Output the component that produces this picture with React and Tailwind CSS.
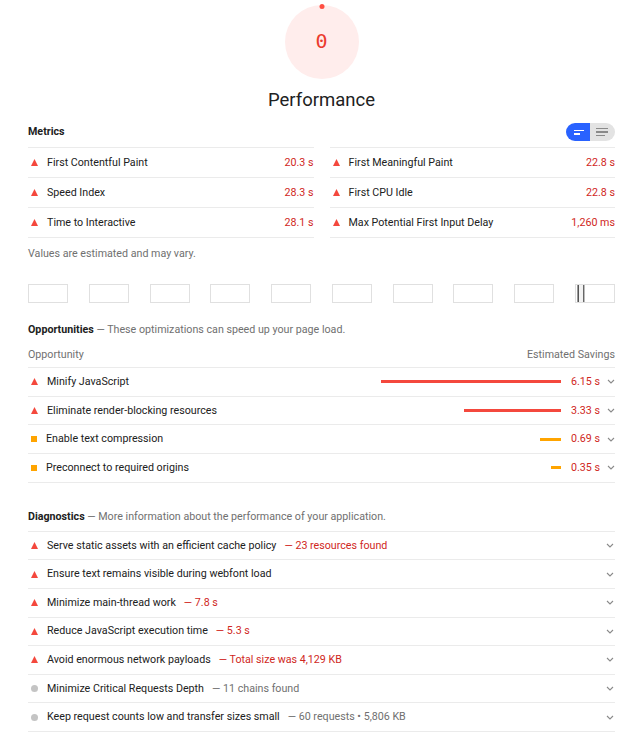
import React from "react";

const Tri = () => (
  <svg width="7" height="7" viewBox="0 0 7 7" className="shrink-0">
    <path d="M3.5 0 L7 7 L0 7 Z" fill="#f4483d" />
  </svg>
);

const Square = () => <span className="block w-[6px] h-[6px] bg-[#ffa400] shrink-0" />;

const Dot = () => <span className="block w-[7px] h-[7px] rounded-full bg-[#c4c4c4] shrink-0" />;

const Chevron = () => (
  <svg width="8" height="5" viewBox="0 0 8 5" className="shrink-0">
    <path d="M1 1 L4 4 L7 1" fill="none" stroke="#8a8a8a" strokeWidth="1.1" />
  </svg>
);

const metricsLeft = [
  ["First Contentful Paint", "20.3 s"],
  ["Speed Index", "28.3 s"],
  ["Time to Interactive", "28.1 s"],
];
const metricsRight = [
  ["First Meaningful Paint", "22.8 s"],
  ["First CPU Idle", "22.8 s"],
  ["Max Potential First Input Delay", "1,260 ms"],
];

const opportunities = [
  { kind: "fail", title: "Minify JavaScript", bar: 180, value: "6.15 s" },
  { kind: "fail", title: "Eliminate render-blocking resources", bar: 97, value: "3.33 s" },
  { kind: "avg", title: "Enable text compression", bar: 21, value: "0.69 s" },
  { kind: "avg", title: "Preconnect to required origins", bar: 10, value: "0.35 s" },
];

const diagnostics = [
  { kind: "fail", title: "Serve static assets with an efficient cache policy", detail: "23 resources found" },
  { kind: "fail", title: "Ensure text remains visible during webfont load" },
  { kind: "fail", title: "Minimize main-thread work", detail: "7.8 s" },
  { kind: "fail", title: "Reduce JavaScript execution time", detail: "5.3 s" },
  { kind: "fail", title: "Avoid enormous network payloads", detail: "Total size was 4,129 KB" },
  { kind: "info", title: "Minimize Critical Requests Depth", detail: "11 chains found" },
  { kind: "info", title: "Keep request counts low and transfer sizes small", detail: "60 requests \u2022 5,806 KB" },
];

function MetricColumn({ items }) {
  return (
    <div className="flex flex-col border-t border-[#ebebeb]">
      {items.map(([label, value]) => (
        <div key={label} className="h-[30px] border-b border-[#ebebeb] flex items-center pl-[3px]">
          <Tri />
          <span className="ml-[9px]">{label}</span>
          <span className="ml-auto text-[#d0271d]">{value}</span>
        </div>
      ))}
    </div>
  );
}

export default function App() {
  return (
    <div className="w-[643px] min-h-[756px] bg-white px-[28px] font-['Roboto',sans-serif] text-[10.7px] leading-[16px] text-[#212121]">
      {/* Gauge */}
      <div className="flex justify-center">
        <div className="relative mt-[4.5px] w-[74px] h-[74px] rounded-full bg-[#ffedec] flex items-center justify-center">
          <span className="absolute left-1/2 -translate-x-1/2 top-[-1px] w-[5px] h-[5px] rounded-full bg-[#ff4e42]" />
          <span className="font-['DejaVu_Sans_Mono',monospace] text-[20px] leading-[24px] text-[#eb3a2e] -mt-[2px]">0</span>
        </div>
      </div>
      <div className="mt-[9.5px] text-center text-[18.5px] leading-[24px] text-[#212121]">Performance</div>

      {/* Metrics header */}
      <div className="h-[35px] pt-[5px] flex items-center justify-between">
        <span className="font-bold">Metrics</span>
        <div className="flex h-[18px] w-[49px] rounded-full overflow-hidden">
          <div className="w-[24px] h-full bg-[#2962ff] flex flex-col justify-center pl-[8px] gap-[2px]">
            <span className="block w-[10px] h-[1.5px] bg-white" />
            <span className="block w-[6px] h-[1.5px] bg-white" />
          </div>
          <div className="flex-1 h-full bg-[#e3e3e3] flex flex-col justify-center pl-[6px] gap-[2px]">
            <span className="block w-[12px] h-[1.5px] bg-[#8a8a8a]" />
            <span className="block w-[12px] h-[1.5px] bg-[#8a8a8a]" />
            <span className="block w-[9px] h-[1.5px] bg-[#8a8a8a]" />
          </div>
        </div>
      </div>

      <div className="grid grid-cols-2 gap-x-4">
        <MetricColumn items={metricsLeft} />
        <MetricColumn items={metricsRight} />
      </div>

      <div className="mt-[8px] text-[#707070]">Values are estimated and may vary.</div>

      {/* Filmstrip */}
      <div className="mt-[22px] flex justify-between">
        {Array.from({ length: 10 }).map((_, i) => (
          <div key={i} className="w-[40px] h-[19px] border border-[#e0e0e0] bg-white relative overflow-hidden">
            {i === 9 && (
              <div className="absolute left-[1px] top-0 bottom-0 flex">
                <span className="block w-[1px] h-full bg-[#9a9a9a]" />
                <span className="block w-[1px] h-full bg-[#555]" />
                <span className="block w-[4px] h-full bg-[#f2f2f2]" />
                <span className="block w-[1px] h-full bg-[#666]" />
                <span className="block w-[1px] h-full bg-[#bbb]" />
              </div>
            )}
          </div>
        ))}
      </div>

      {/* Opportunities */}
      <div className="mt-[19px]">
        <span className="font-bold">Opportunities</span>
        <span className="text-[#707070]"> — These optimizations can speed up your page load.</span>
      </div>
      <div className="mt-[9px] pb-[4px] border-b border-[#ebebeb] flex justify-between text-[#707070]">
        <span>Opportunity</span>
        <span>Estimated Savings</span>
      </div>
      {opportunities.map((o) => (
        <div key={o.title} className="h-[28.7px] border-b border-[#ebebeb] flex items-center pl-[3px]">
          {o.kind === "fail" ? <Tri /> : <Square />}
          <span className="ml-[9px]">{o.title}</span>
          <div className="ml-auto flex items-center">
            <span
              className={"block h-[3px] mr-[10px] " + (o.kind === "fail" ? "bg-[#f4483d]" : "bg-[#ffa400]")}
              style={{ width: o.bar }}
            />
            <span className="text-[#d0271d]">{o.value}</span>
            <span className="ml-[7px]">
              <Chevron />
            </span>
          </div>
        </div>
      ))}

      {/* Diagnostics */}
      <div className="mt-[26px] pb-[6px] border-b border-[#ebebeb]">
        <span className="font-bold">Diagnostics</span>
        <span className="text-[#707070]"> — More information about the performance of your application.</span>
      </div>
      {diagnostics.map((d) => (
        <div key={d.title} className="h-[28.6px] border-b border-[#ebebeb] flex items-center pl-[3px]">
          {d.kind === "fail" ? <Tri /> : <Dot />}
          <span className="ml-[9px]">{d.title}</span>
          {d.detail && (
            <span className={"ml-[8px] " + (d.kind === "fail" ? "text-[#d0271d]" : "text-[#707070]")}>
              — {d.detail}
            </span>
          )}
          <span className="ml-auto mr-[1px]">
            <Chevron />
          </span>
        </div>
      ))}
    </div>
  );
}
